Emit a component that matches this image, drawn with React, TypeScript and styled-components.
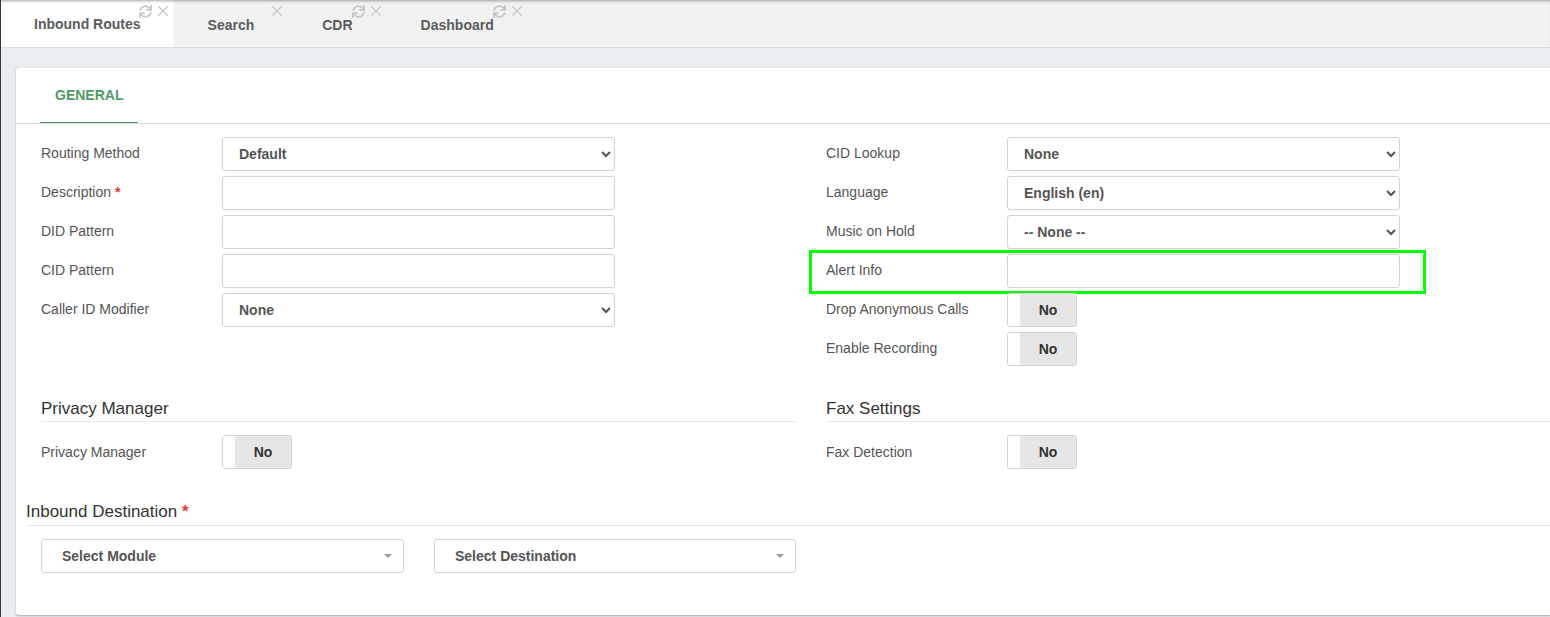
import React from 'react';
import styled, { createGlobalStyle } from 'styled-components';
import { FaSync } from 'react-icons/fa';
import { X } from 'lucide-react';

const GlobalStyle = createGlobalStyle`
  html, body {
    margin: 0;
    height: 617px;
    overflow: hidden;
    background: #e9edf0;
    font-family: "Liberation Sans", Arial, sans-serif;
    font-size: 14px;
    color: #555;
  }
  * { box-sizing: border-box; }
`;

const Page = styled.div`
  width: 1550px;
  height: 617px;
  border-left: 1px solid #2a3a4a;
  overflow: hidden;
`;

const TabBar = styled.div`
  height: 48px;
  display: flex;
  background: #f1f3f3;
  border-bottom: 1px solid #d9dcdd;
  box-shadow: inset 0 3px 3px -2px rgba(0, 0, 0, 0.35);
`;

const Tab = styled.div<{ $active?: boolean }>`
  position: relative;
  height: 47px;
  padding: ${(p) => (p.$active ? '16px 33px 0' : '17px 34px 0')};
  font-weight: bold;
  font-size: 14px;
  line-height: 17px;
  color: #5c5c5c;
  background: ${(p) => (p.$active ? '#fff' : 'transparent')};
  box-shadow: ${(p) => (p.$active ? 'inset 0 3px 3px -2px rgba(0, 0, 0, 0.35)' : 'none')};
`;

const TabIcons = styled.div`
  position: absolute;
  top: 2px;
  right: 2px;
  display: flex;
  align-items: center;
  gap: 2px;
  color: #c8c8c8;
  line-height: 0;
`;

const Content = styled.div`
  padding: 20px 0 0 15px;
`;

const Card = styled.div`
  height: 547px;
  background: #fff;
  border-radius: 3px 0 0 3px;
  box-shadow: 0 1px 2px rgba(0, 0, 0, 0.3);
`;

const CardNav = styled.div`
  height: 56px;
  padding-left: 24px;
  border-bottom: 1px solid #dcdfe0;
`;

const NavItem = styled.div`
  width: 98px;
  height: 55px;
  padding: 19px 0 0 15px;
  font-weight: bold;
  font-size: 14px;
  line-height: 17px;
  color: #4f9a6a;
  border-bottom: 1px solid #4f9a6a;
`;

const Body = styled.div`
  padding: 13px 0 0 10px;
`;

const Columns = styled.div`
  display: grid;
  grid-template-columns: 785px 785px;
`;

const Column = styled.div`
  padding: 0 15px;
`;

const Row = styled.div`
  position: relative;
  display: flex;
  height: 34px;
  margin-bottom: 5px;
`;

const Label = styled.label`
  width: 181px;
  flex: none;
  padding-top: 8px;
  line-height: 17px;
  font-size: 14px;
  color: #555;
`;

const SectionLabel = styled(Label)`
  padding-top: 9px;
`;

const Required = styled.span`
  color: #e53935;
  font-weight: bold;
`;

const Select = styled.select`
  width: 393px;
  height: 34px;
  padding: 0 12px;
  border: 1px solid #d3d3d3;
  border-radius: 3px;
  background: #fff;
  font-family: inherit;
  font-size: 14px;
  font-weight: bold;
  color: #555;
`;

const Input = styled.input`
  width: 393px;
  height: 34px;
  padding: 0 12px;
  border: 1px solid #d3d3d3;
  border-radius: 3px;
  background: #fff;
`;

const Toggle = styled.div`
  display: flex;
  width: 70px;
  height: 34px;
  border: 1px solid #d3d3d3;
  border-radius: 3px;
  overflow: hidden;
`;

const ToggleKnob = styled.div`
  width: 12px;
  background: #fff;
`;

const ToggleValue = styled.div`
  flex: 1;
  display: flex;
  align-items: center;
  justify-content: center;
  background: #e6e6e6;
  font-weight: bold;
  font-size: 14px;
  color: #333;
`;

const Highlight = styled.div`
  position: absolute;
  top: -4px;
  left: -17px;
  width: 617px;
  height: 44px;
  border: 3px solid #00ff00;
  pointer-events: none;
`;

const Heading = styled.h4`
  margin: 28px 0 13px;
  padding-bottom: 2px;
  border-bottom: 1px solid #e6e8e9;
  font-weight: normal;
  font-size: 17px;
  line-height: 20px;
  color: #333;
`;

const WideHeading = styled(Heading)`
  padding-bottom: 3px;
`;

const Destination = styled.div`
  display: flex;
  gap: 30px;
  padding-left: 15px;
`;

const DropDown = styled.div<{ $width: number }>`
  display: flex;
  align-items: center;
  justify-content: space-between;
  width: ${(p) => p.$width}px;
  height: 34px;
  padding: 0 11px 0 20px;
  border: 1px solid #d3d3d3;
  border-radius: 3px;
  font-weight: bold;
  font-size: 14px;
  color: #555;
`;

const Caret = styled.span`
  width: 0;
  height: 0;
  border-left: 4px solid transparent;
  border-right: 4px solid transparent;
  border-top: 4px solid #999;
`;

const tabs = [
  { name: 'Inbound Routes', active: true, refresh: true },
  { name: 'Search', refresh: false },
  { name: 'CDR', refresh: true },
  { name: 'Dashboard', refresh: true },
];

const Switch = () => (
  <Toggle>
    <ToggleKnob />
    <ToggleValue>No</ToggleValue>
  </Toggle>
);

const Choice = ({ value }: { value: string }) => (
  <Select defaultValue={value}>
    <option>{value}</option>
  </Select>
);

const App = () => {
  return (
    <Page>
      <GlobalStyle />
      <TabBar>
        {tabs.map((t) => (
          <Tab key={t.name} $active={t.active}>
            {t.name}
            <TabIcons>
              {t.refresh && <FaSync size={13} />}
              <X size={18} strokeWidth={1.6} />
            </TabIcons>
          </Tab>
        ))}
      </TabBar>
      <Content>
        <Card>
          <CardNav>
            <NavItem>GENERAL</NavItem>
          </CardNav>
          <Body>
            <Columns>
              <Column>
                <Row>
                  <Label>Routing Method</Label>
                  <Choice value="Default" />
                </Row>
                <Row>
                  <Label>
                    Description <Required>*</Required>
                  </Label>
                  <Input />
                </Row>
                <Row>
                  <Label>DID Pattern</Label>
                  <Input />
                </Row>
                <Row>
                  <Label>CID Pattern</Label>
                  <Input />
                </Row>
                <Row>
                  <Label>Caller ID Modifier</Label>
                  <Choice value="None" />
                </Row>
              </Column>
              <Column>
                <Row>
                  <Label>CID Lookup</Label>
                  <Choice value="None" />
                </Row>
                <Row>
                  <Label>Language</Label>
                  <Choice value="English (en)" />
                </Row>
                <Row>
                  <Label>Music on Hold</Label>
                  <Choice value="-- None --" />
                </Row>
                <Row>
                  <Label>Alert Info</Label>
                  <Input />
                  <Highlight />
                </Row>
                <Row>
                  <Label>Drop Anonymous Calls</Label>
                  <Switch />
                </Row>
                <Row>
                  <Label>Enable Recording</Label>
                  <Switch />
                </Row>
              </Column>
              <Column>
                <Heading>Privacy Manager</Heading>
                <Row>
                  <SectionLabel>Privacy Manager</SectionLabel>
                  <Switch />
                </Row>
              </Column>
              <Column>
                <Heading>Fax Settings</Heading>
                <Row>
                  <SectionLabel>Fax Detection</SectionLabel>
                  <Switch />
                </Row>
              </Column>
            </Columns>
            <WideHeading>
              Inbound Destination <Required>*</Required>
            </WideHeading>
            <Destination>
              <DropDown $width={363}>
                Select Module
                <Caret />
              </DropDown>
              <DropDown $width={362}>
                Select Destination
                <Caret />
              </DropDown>
            </Destination>
          </Body>
        </Card>
      </Content>
    </Page>
  );
};

export default App;
